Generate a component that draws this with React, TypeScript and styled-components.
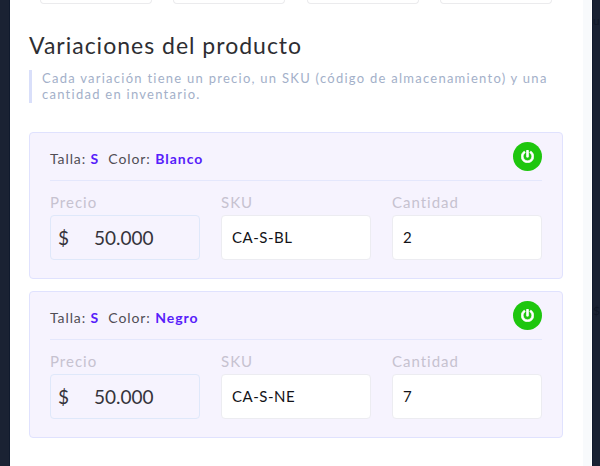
import React from "react";
import styled, { createGlobalStyle } from "styled-components";
import { FaPowerOff } from "react-icons/fa";

const GlobalStyle = createGlobalStyle`
  * { box-sizing: border-box; }
  body { margin: 0; background: #1a2233; font-family: Lato, "Liberation Sans", sans-serif; }
`;

const Screen = styled.div`
  display: grid;
  grid-template-columns: 10px 582px 8px;
  width: 600px;
  height: 466px;
  overflow: hidden;
  background: #1a2233;
`;

const Backdrop = styled.div<{ $side: "left" | "right" }>`
  overflow: hidden;
  color: #111827;
  font-size: 12px;
  border: 0 solid #101a2d;
  border-width: ${(p) => (p.$side === "left" ? "0 1px 0 0" : "0 0 0 1px")};
`;

const BackdropMark = styled.div<{ $top: number }>`
  height: 18px;
  line-height: 18px;
  margin-top: ${(p) => p.$top}px;
`;

const Panel = styled.main`
  height: 466px;
  overflow: hidden;
  background: #fff;
  border-right: 1px solid #fff;
  box-shadow: inset -8px 0 #f8fafc;
  padding: 0 29px 0 19px;
`;

const OptionRow = styled.div`
  display: grid;
  grid-template-columns: repeat(4, 112px);
  justify-content: space-between;
  margin: 0 10px 0 11px;
  height: 4px;
`;

const OptionBox = styled.div`
  border: 1px solid #ebebed;
  border-top: 0;
  border-radius: 0 0 4px 4px;
`;

const Title = styled.h1`
  margin: 26px 0 0;
  height: 30px;
  line-height: 30px;
  font-size: 23px;
  font-weight: 400;
  letter-spacing: 1px;
  color: #2e2e32;
  white-space: nowrap;
`;

const Hint = styled.p`
  margin: 10px 0 29px;
  height: 33px;
  padding-left: 10px;
  border-left: 3px solid #d9dffa;
  color: #a3b0c9;
  font-size: 13px;
  line-height: 16px;
  letter-spacing: 1.26px;
  white-space: nowrap;
`;

const Card = styled.section`
  width: 534px;
  height: 147px;
  margin-bottom: 12px;
  padding: 0 20px;
  background: #f6f3fe;
  border: 1px solid #e0e2fe;
  border-radius: 4px;
`;

const CardHeader = styled.header`
  display: flex;
  align-items: center;
  justify-content: space-between;
  height: 48px;
  border-bottom: 1px solid #e4e7fc;
`;

const Attributes = styled.div`
  display: flex;
  gap: 9px;
  padding-top: 5px;
  font-size: 14px;
  line-height: 18px;
  letter-spacing: 0.9px;
  color: #504d55;
`;

const Value = styled.b`
  font-weight: 700;
  letter-spacing: 1px;
  color: #5620fa;
`;

const PowerButton = styled.button`
  display: grid;
  place-items: center;
  width: 29px;
  height: 29px;
  padding: 0;
  border: 0;
  border-radius: 50%;
  background: #1ec60e;
  color: #fff;
  font-size: 13px;

  svg { stroke: #fff; stroke-width: 24px; }
`;

const Fields = styled.div`
  display: grid;
  grid-template-columns: repeat(3, 150px);
  justify-content: space-between;
  padding-top: 12px;
`;

const Label = styled.label`
  display: block;
  height: 22px;
  line-height: 19px;
  font-size: 15px;
  letter-spacing: 1px;
  color: #c6c2d0;
`;

const Input = styled.div`
  height: 45px;
  padding-left: 10px;
  line-height: 43px;
  background: #fff;
  border: 1px solid #ececf1;
  border-radius: 4px;
  font-size: 15px;
  letter-spacing: 0.5px;
  color: #131318;
`;

const PriceInput = styled(Input)`
  display: grid;
  grid-template-columns: 36px auto;
  padding-left: 7px;
  background: transparent;
  border-color: #dfe8fa;
  font-size: 19px;
  letter-spacing: 0;
  color: #35333b;
`;

type Variation = { size: string; color: string; price: string; sku: string; quantity: string };

const variations: Variation[] = [
  { size: "S", color: "Blanco", price: "50.000", sku: "CA-S-BL", quantity: "2" },
  { size: "S", color: "Negro", price: "50.000", sku: "CA-S-NE", quantity: "7" },
];

function VariationCard({ size, color, price, sku, quantity }: Variation) {
  return (
    <Card>
      <CardHeader>
        <Attributes>
          <span>Talla: <Value>{size}</Value></span>
          <span>Color: <Value>{color}</Value></span>
        </Attributes>
        <PowerButton aria-label="Activar"><FaPowerOff /></PowerButton>
      </CardHeader>
      <Fields>
        <div><Label>Precio</Label><PriceInput><span>$</span><span>{price}</span></PriceInput></div>
        <div><Label>SKU</Label><Input>{sku}</Input></div>
        <div><Label>Cantidad</Label><Input>{quantity}</Input></div>
      </Fields>
    </Card>
  );
}

export default function App() {
  return (
    <>
      <GlobalStyle />
      <Screen>
        <Backdrop $side="left" />
        <Panel>
          <OptionRow>
            <OptionBox /><OptionBox /><OptionBox /><OptionBox />
          </OptionRow>
          <Title>Variaciones del producto</Title>
          <Hint>
            Cada variación tiene un precio, un SKU (código de almacenamiento) y una
            <br />
            cantidad en inventario.
          </Hint>
          {variations.map((v) => <VariationCard key={v.color} {...v} />)}
        </Panel>
        <Backdrop $side="right">
          <BackdropMark $top={12}>u</BackdropMark>
          <BackdropMark $top={272}>$</BackdropMark>
        </Backdrop>
      </Screen>
    </>
  );
}
